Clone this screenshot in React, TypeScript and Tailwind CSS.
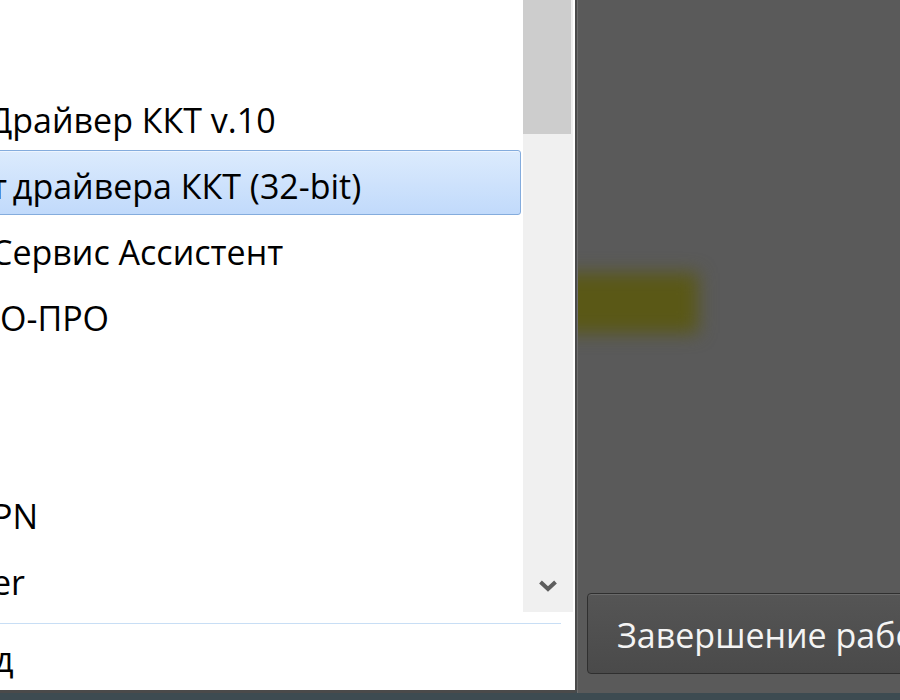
import React from "react";

const font = { fontFamily: '"Open Sans", "Noto Sans", "DejaVu Sans", sans-serif' };

function Row({ text, offset, highlight }: { text: React.ReactNode; offset: string; highlight?: boolean }) {
  return (
    <div className="relative flex h-[66px] shrink-0 items-center">
      {highlight && (
        <div className="absolute left-[-4px] right-0 top-0 h-[65px] rounded-r-[3px] border border-[#84acdd] bg-gradient-to-b from-[#dcebfd] to-[#c1dafb] shadow-[inset_0_1px_0_#eef5fe]" />
      )}
      <span className={`relative whitespace-nowrap pt-[6px] text-[34px] leading-none text-black ${offset}`}>{text}</span>
    </div>
  );
}

export default function App() {
  return (
    <div className="flex h-[700px] w-[900px] flex-col overflow-hidden bg-[#3d4b51]" style={font}>
      <div className="flex h-[693px] shrink-0">
        {/* start menu white panel */}
        <div className="flex w-[577px] shrink-0 flex-col overflow-hidden rounded-br-[3px] border-b-[3px] border-r-2 border-[#4a4a4a] bg-white">
          <div className="flex h-[612px] shrink-0">
            <div className="flex w-[521px] shrink-0 flex-col overflow-hidden">
              <div className="mt-[-48px] flex flex-col">
                <Row text="" offset="" />
                <Row text="" offset="" />
                <Row text="Драйвер ККТ v.10" offset="ml-[-11px]" />
                <Row
                  text={
                    <>
                      <span className="mr-[-3px]">т</span> драйвера ККТ (32-bit)
                    </>
                  }
                  offset="ml-[-9px]"
                  highlight
                />
                <Row text="Сервис Ассистент" offset="ml-[-9px]" />
                <Row text="О-ПРО" offset="ml-[0px]" />
                <Row text="" offset="" />
                <Row text="" offset="" />
                <Row text="PN" offset="ml-[-8px]" />
                <Row text="er" offset="ml-[-8px]" />
              </div>
            </div>
            <div className="ml-[2px] flex w-[50px] shrink-0 flex-col bg-[#f0f0f0]">
              <div className="h-[134px] w-[48px] bg-[#cdcdcd]" />
              <div className="flex-1" />
              <div className="flex h-[46px] items-center justify-center pb-[6px]">
                <svg width="20" height="14" viewBox="0 0 20 14">
                  <path d="M2.5 3 L10 10 L17.5 3" fill="none" stroke="#5e5e5e" strokeWidth="4" />
                </svg>
              </div>
            </div>
          </div>
          <div className="mt-[11px] h-px w-[561px] shrink-0 bg-[#c8def5]" />
          <div className="flex flex-1 items-center">
            <span className="ml-[-6px] whitespace-nowrap pt-[4px] text-[34px] leading-none text-black">д</span>
          </div>
        </div>
        {/* dark aero area */}
        <div className="relative flex flex-1 flex-col overflow-hidden border-l border-[#6e6e6e] bg-[#5a5a5a]">
          <div className="absolute left-[-30px] top-[273px] h-[60px] w-[150px] bg-[#5a5816] blur-[9px]" />
          <div className="flex-1" />
          <div className="mb-[19px] ml-[9px] flex h-[81px] w-[420px] shrink-0 items-center rounded-[4px] border border-[#2f2f2f] bg-gradient-to-b from-[#555555] to-[#4a4a4a] pl-[29px] shadow-[inset_0_1px_0_#6a6a6a]">
            <span className="whitespace-nowrap pt-[2px] text-[34px] leading-none text-[#f4f4f4]">Завершение работы</span>
          </div>
        </div>
      </div>
    </div>
  );
}
